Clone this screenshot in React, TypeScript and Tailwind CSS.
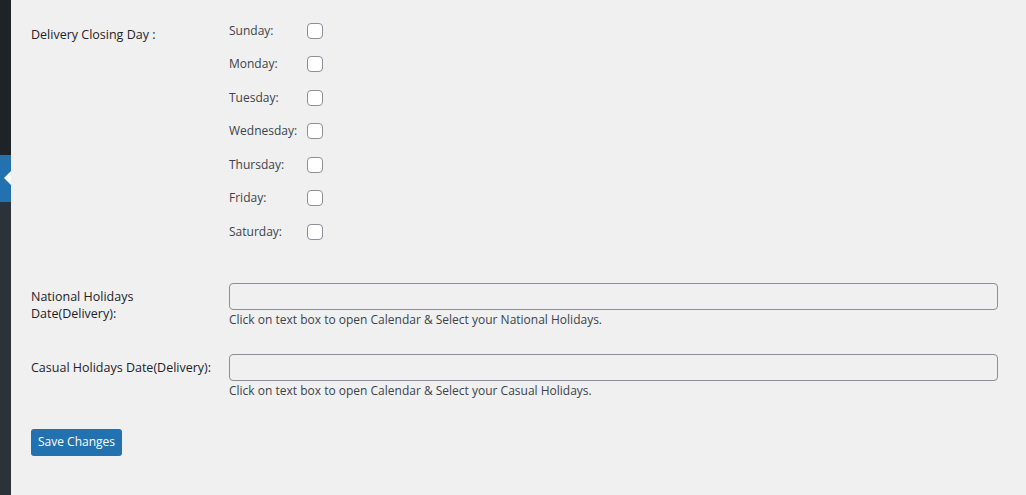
import React from 'react';

const days = ['Sunday', 'Monday', 'Tuesday', 'Wednesday', 'Thursday', 'Friday', 'Saturday'];

const font = { fontFamily: '"Open Sans", "Noto Sans", sans-serif' };

function HolidayField({ label, hint }: { label: React.ReactNode; hint: string }) {
  return (
    <div className="flex">
      <div className="w-[198px] shrink-0 pt-[5px] text-[12.5px] leading-[17px] font-medium text-[#1d2327]">
        {label}
      </div>
      <div className="flex-1 pr-[28px]">
        <input
          type="text"
          className="block h-[27px] w-full rounded-[4px] border border-[#8c8f94] bg-[#f0f0f1] px-2 outline-none"
        />
        <p className="mt-[1px] text-[12px] leading-[18px] text-[#3c434a]">{hint}</p>
      </div>
    </div>
  );
}

export default function App() {
  return (
    <div className="flex h-[495px] overflow-hidden bg-[#f0f0f1]" style={font}>
      <div className="flex w-[11px] shrink-0 flex-col">
        <div className="h-[155px] bg-[#1d2327]" />
        <div className="relative h-[47px] bg-[#2271b1]">
          <span className="absolute right-0 top-[16px] h-0 w-0 border-y-[7px] border-r-[7px] border-y-transparent border-r-white" />
        </div>
        <div className="flex-1 bg-[#2c3338]" />
      </div>

      <div className="flex-1 pl-[20px]">
        <div className="flex pt-[14px]">
          <div className="w-[198px] shrink-0 pt-[12px] text-[12.5px] leading-[17px] font-medium text-[#1d2327]">
            Delivery Closing Day :
          </div>
          <div className="flex flex-col">
            {days.map((day) => (
              <label key={day} className="flex h-[33.5px] items-center text-[12px] text-[#3c434a]">
                <span className="w-[78px]">{day}:</span>
                <input
                  type="checkbox"
                  className="h-4 w-4 appearance-none rounded-[4px] border border-[#8c8f94] bg-white"
                />
              </label>
            ))}
          </div>
        </div>

        <div className="mt-[34px] flex flex-col gap-[25px]">
          <HolidayField
            label={
              <>
                National Holidays
                <br />
                Date(Delivery):
              </>
            }
            hint="Click on text box to open Calendar & Select your National Holidays."
          />
          <HolidayField
            label="Casual Holidays Date(Delivery):"
            hint="Click on text box to open Calendar & Select your Casual Holidays."
          />
        </div>

        <button className="mt-[29px] h-[27px] rounded-[3px] bg-[#2271b1] px-[7px] text-[12px] text-white">
          Save Changes
        </button>
      </div>
    </div>
  );
}
